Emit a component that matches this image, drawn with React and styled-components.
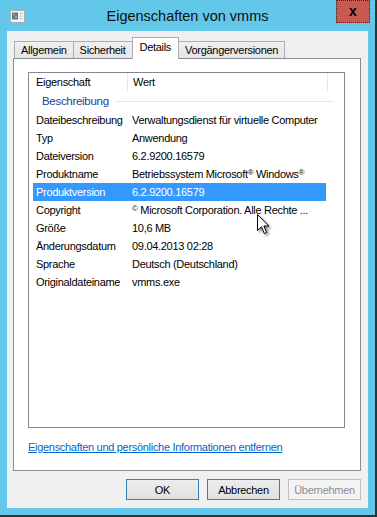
import styled, { createGlobalStyle } from "styled-components";

const GlobalStyle = createGlobalStyle`
    html, body {
        margin: 0;
        padding: 0;
        background: #63c7e9;
    }
    body {
        font-family: "Liberation Sans", Arial, sans-serif;
        font-size: 11px;
        letter-spacing: -0.3px;
        color: #000;
    }
`

const Window = styled.div`
    position: relative;
    width: 377px;
    height: 517px;
    box-sizing: border-box;
    background: #63c7e9;
    border-right: 2px solid #2e3436;
    border-bottom: 2px solid #2e3436;
    display: flex;
    flex-direction: column;
    overflow: hidden;
`

const TitleBar = styled.div`
    height: 31px;
    flex-shrink: 0;
    display: grid;
    grid-template-columns: 1fr auto 1fr;
    align-items: center;
`

const AppIcon = styled.div`
    padding-left: 10px;
    padding-top: 1px;
    display: flex;
`

const Title = styled.div`
    font-size: 14.5px;
    letter-spacing: 0;
    color: #111;
    padding-top: 1px;
`

const CloseSlot = styled.div`
    align-self: start;
    justify-self: end;
    padding-right: 5px;
`

const CloseButton = styled.div`
    width: 32px;
    height: 19px;
    background: #c75a50;
    border: 1px dotted #4a1f1a;
    display: flex;
    align-items: center;
    justify-content: center;
    font-weight: bold;
    font-size: 14px;
    letter-spacing: 0;
    line-height: 1;
    padding-bottom: 2px;
    box-sizing: content-box;
`

const Client = styled.div`
    flex: 1;
    margin: 0 7px 7px 7px;
    background: #f0f0f0;
    padding: 6px 7px 8px 6px;
    display: flex;
    flex-direction: column;
    min-height: 0;
`

const TabRow = styled.div`
    height: 21px;
    display: flex;
    align-items: flex-end;
    padding-left: 2px;
    flex-shrink: 0;
`

const Tab = styled.div`
    position: relative;
    box-sizing: border-box;
    height: ${p => (p.active ? "22px" : "17px")};
    margin-bottom: ${p => (p.active ? "-1px" : "0")};
    margin-left: -1px;
    padding: ${p => (p.active ? "0 7px 3px 7px" : "0 6px")};
    border: 1px solid #acacac;
    border-bottom: ${p => (p.active ? "none" : "0")};
    background: ${p => (p.active ? "#fff" : "linear-gradient(#f0f0f0, #e5e5e5)")};
    z-index: ${p => (p.active ? 2 : 1)};
    display: flex;
    align-items: center;
    white-space: nowrap;
`

const Panel = styled.div`
    flex: 1;
    background: #fff;
    border: 1px solid #898c95;
    padding: 13px 15px 0 14px;
    display: flex;
    flex-direction: column;
    min-height: 0;
`

const ListBox = styled.div`
    height: 356px;
    box-sizing: border-box;
    border: 1px solid #828790;
    display: flex;
    flex-direction: column;
    flex-shrink: 0;
`

const HeaderRow = styled.div`
    height: 18px;
    display: flex;
    flex-shrink: 0;
`

const HeaderCell = styled.div`
    width: ${p => p.w}px;
    flex: ${p => (p.fill ? 1 : "none")};
    padding-left: ${p => p.pad || 0}px;
    box-sizing: border-box;
    border-right: ${p => (p.fill ? "none" : "1px solid #e3e5e8")};
    display: flex;
    align-items: center;
    background: #fff;
`

const GroupRow = styled.div`
    height: 20px;
    display: flex;
    align-items: center;
    padding-left: 13px;
    padding-right: 10px;
    flex-shrink: 0;
`

const GroupLabel = styled.span`
    color: #1e3c94;
    font-size: 11.5px;
`

const GroupLine = styled.div`
    flex: 1;
    height: 1px;
    background: #e2e8ef;
    margin-left: 6px;
`

const Row = styled.div`
    height: 18px;
    width: 293px;
    margin-left: 4px;
    display: flex;
    align-items: center;
    flex-shrink: 0;
    background: ${p => (p.selected ? "#3399ff" : "transparent")};
    color: ${p => (p.selected ? "#fff" : "#000")};
    white-space: nowrap;
`

const KeyCell = styled.div`
    width: 99px;
    padding-left: 3px;
    box-sizing: border-box;
    flex-shrink: 0;
`

const ValueCell = styled.div`
    flex: 1;
    overflow: hidden;
`

const Sup = styled.span`
    font-size: 8px;
    vertical-align: 3px;
`

const RemoveLink = styled.a`
    margin-top: 12px;
    color: #0066cc;
    text-decoration: underline;
    line-height: 14px;
    white-space: nowrap;
    align-self: flex-start;
`

const ButtonRow = styled.div`
    display: flex;
    justify-content: flex-end;
    gap: 8px;
    margin-top: 8px;
    flex-shrink: 0;
`

const Button = styled.div`
    width: 73px;
    height: 21px;
    box-sizing: border-box;
    display: flex;
    align-items: center;
    justify-content: center;
    border: 1px solid ${p => (p.primary ? "#3c7fb1" : p.disabled ? "#bfbfbf" : "#707070")};
    background: ${p => (p.disabled ? "#f4f4f4" : "linear-gradient(#ececec, #e1e1e1)")};
    color: ${p => (p.disabled ? "#8d8d8d" : "#000")};
`

const Cursor = styled.svg`
    position: absolute;
    left: 257px;
    top: 214px;
    filter: drop-shadow(2px 2px 1.5px rgba(0, 0, 0, 0.45));
`

const rows = [
    ["Dateibeschreibung", "Verwaltungsdienst für virtuelle Computer"],
    ["Typ", "Anwendung"],
    ["Dateiversion", "6.2.9200.16579"],
    ["Produktname", <>Betriebssystem Microsoft<Sup>®</Sup> Windows<Sup>®</Sup></>],
    ["Produktversion", "6.2.9200.16579", true],
    ["Copyright", <><Sup>©</Sup> Microsoft Corporation. Alle Rechte ...</>],
    ["Größe", "10,6 MB"],
    ["Änderungsdatum", "09.04.2013 02:28"],
    ["Sprache", "Deutsch (Deutschland)"],
    ["Originaldateiname", "vmms.exe"],
]

const tabs = ["Allgemein", "Sicherheit", "Details", "Vorgängerversionen"]

const App = () => {
    return (
        <>
            <GlobalStyle />
            <Window>
                <TitleBar>
                    <AppIcon>
                        <svg width="15" height="13" viewBox="0 0 15 13">
                            <rect x="0.5" y="0.5" width="14" height="12" fill="#f4f4f4" stroke="#a9adb2" />
                            <rect x="2" y="2.5" width="6" height="7" fill="#4f7f8c" />
                            <rect x="3" y="3.5" width="2" height="2" fill="#7fb0a0" />
                            <rect x="5" y="6" width="2" height="2" fill="#9aa6c4" />
                            <rect x="9.5" y="3" width="3" height="1" fill="#b8bcc2" />
                            <rect x="9.5" y="5.5" width="3" height="1" fill="#b8bcc2" />
                            <rect x="9.5" y="8" width="3" height="1" fill="#b8bcc2" />
                        </svg>
                    </AppIcon>
                    <Title>Eigenschaften von vmms</Title>
                    <CloseSlot>
                        <CloseButton>x</CloseButton>
                    </CloseSlot>
                </TitleBar>
                <Client>
                    <TabRow>
                        {tabs.map(t => (
                            <Tab key={t} active={t === "Details"}>{t}</Tab>
                        ))}
                    </TabRow>
                    <Panel>
                        <ListBox>
                            <HeaderRow>
                                <HeaderCell w={99} pad={7}>Eigenschaft</HeaderCell>
                                <HeaderCell w={200} pad={5}>Wert</HeaderCell>
                                <HeaderCell fill />
                            </HeaderRow>
                            <GroupRow>
                                <GroupLabel>Beschreibung</GroupLabel>
                                <GroupLine />
                            </GroupRow>
                            {rows.map(([k, v, sel]) => (
                                <Row key={k} selected={sel}>
                                    <KeyCell>{k}</KeyCell>
                                    <ValueCell>{v}</ValueCell>
                                </Row>
                            ))}
                        </ListBox>
                        <RemoveLink>Eigenschaften und persönliche Informationen entfernen</RemoveLink>
                    </Panel>
                    <ButtonRow>
                        <Button primary>OK</Button>
                        <Button>Abbrechen</Button>
                        <Button disabled>Übernehmen</Button>
                    </ButtonRow>
                </Client>
                <Cursor width="13" height="21" viewBox="0 0 13 21">
                    <path d="M0.5 0.5 L0.5 16.5 L4.5 12.8 L7.3 19.5 L9.6 18.5 L6.9 12 L11.8 12 Z" fill="#fff" stroke="#000" strokeWidth="1" strokeLinejoin="miter" />
                </Cursor>
            </Window>
        </>
    )
}

export default App
